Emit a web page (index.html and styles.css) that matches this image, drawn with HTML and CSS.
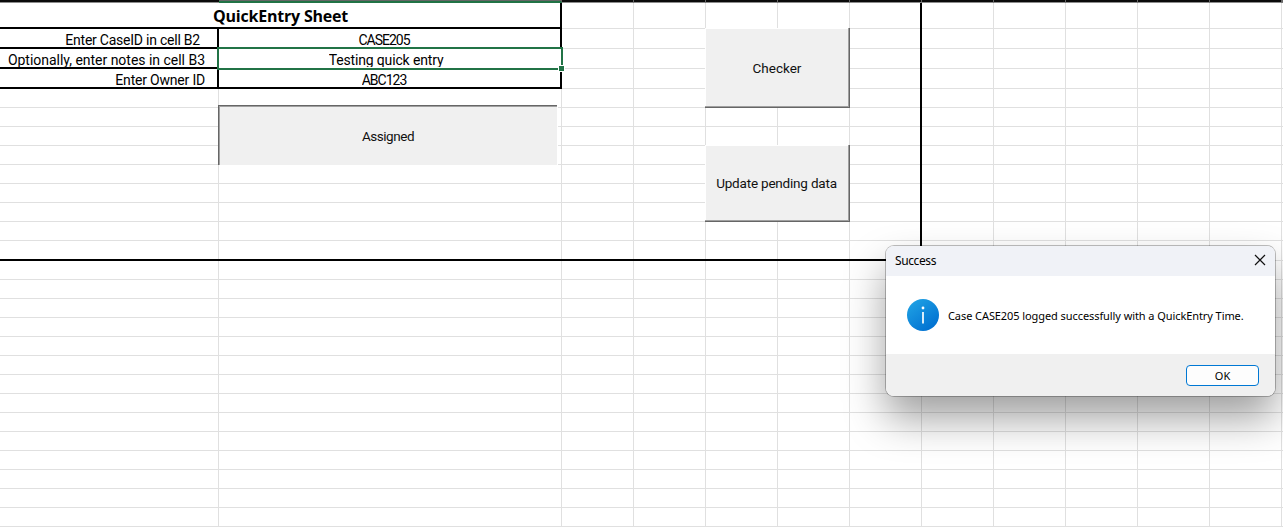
FILE: index.html
```html
<!DOCTYPE html>
<html lang="en">
<head>
<meta charset="utf-8">
<title>QuickEntry Sheet</title>
<link rel="stylesheet" href="styles.css">
</head>
<body>
<main class="workbook">
  <table class="sheet">
    <colgroup>
      <col class="col-label"><col class="col-value">
      <col span="10" class="col-std"><col class="col-last">
    </colgroup>
    <thead>
      <tr class="strip"><th></th><th class="active"></th><th></th><th></th><th></th><th></th><th></th><th></th><th></th><th></th><th></th><th></th><th></th></tr>
    </thead>
    <tbody id="rows">
      <tr class="title-row"><td colspan="2" class="heading boxed"><span class="t-title">QuickEntry Sheet</span></td></tr>
      <tr class="entry"><td class="label boxed indent"><span class="t-case">Enter CaseID in cell B2</span></td><td class="value boxed"><span class="t-id">CASE205</span></td></tr>
      <tr class="entry"><td class="label boxed"><span class="t-notes">Optionally, enter notes in cell B3</span></td><td class="value boxed selected"><span class="t-test">Testing quick entry</span></td></tr>
      <tr class="entry"><td class="label boxed"><span class="t-owner">Enter Owner ID</span></td><td class="value boxed"><span class="t-id">ABC123</span></td></tr>
    </tbody>
  </table>

  <div class="frame"></div>
  <div class="selection"><i class="handle"></i></div>

  <button class="macro pressed assigned"><span>Assigned</span></button>
  <button class="macro raised checker"><span>Checker</span></button>
  <button class="macro raised update"><span>Update pending data</span></button>

  <section class="dialog">
    <header class="dialog-title">
      <span class="t-success">Success</span>
      <svg class="close" width="12" height="12" viewBox="0 0 12 12"><path d="M1 1 11 11M11 1 1 11" fill="none" stroke="#111" stroke-width="1.2"/></svg>
    </header>
    <div class="dialog-body">
      <svg width="32" height="32" viewBox="0 0 32 32">
        <defs><linearGradient id="info" x1="0.15" y1="0.1" x2="0.8" y2="0.95"><stop offset="0" stop-color="#1e9fe3"/><stop offset="1" stop-color="#0070d1"/></linearGradient></defs>
        <circle cx="16" cy="16" r="16" fill="url(#info)"/>
        <circle cx="16" cy="9" r="1.4" fill="#fff"/>
        <path d="M16 13v11.5" stroke="#fff" stroke-width="1.7"/>
      </svg>
      <span class="t-message">Case CASE205 logged successfully with a QuickEntry Time.</span>
    </div>
    <footer class="dialog-footer"><button class="ok">OK</button></footer>
  </section>
</main>
<script src="sheet.js"></script>
</body>
</html>
```

FILE: sheet.js
```js
// Fill the grid with empty cells out to the last visible column and row.
const COLUMNS = 13;
const ROWS = 27;
const FRAME_ROW = 13;
const body = document.getElementById("rows");

while (body.rows.length < ROWS) body.insertRow();

Array.from(body.rows).forEach((row, r) => {
  let used = Array.from(row.cells).reduce((n, c) => n + c.colSpan, 0);
  for (; used < COLUMNS; used++) row.insertCell();
  if (r === FRAME_ROW - 1) row.classList.add("frame-bottom");
});
```

FILE: styles.css
```css
* { box-sizing: border-box; }

body {
  margin: 0;
  background: #fff;
  color: #000;
  font-family: "Noto Sans", "Open Sans", sans-serif;
}

.workbook {
  position: relative;
  width: 1283px;
  height: 527px;
  overflow: hidden;
}

.sheet {
  width: 1283px;
  table-layout: fixed;
  border-collapse: separate;
  border-spacing: 0;
}
.col-label { width: 219px; }
.col-value { width: 343px; }
.col-std { width: 72px; }
.col-last { width: 1px; }

.strip th {
  height: 3px;
  padding: 0;
  background: #0a0a0a;
  border-bottom: 1px solid #8c8c8c;
  border-right: 1px solid #666;
}
.strip th:first-child { border-right: 0; }
.strip th.active {
  background: #666;
  border-bottom: 2px solid #217346;
}

.sheet td {
  height: 19px;
  padding: 0;
  border-right: 1px solid #e0e0e0;
  border-bottom: 1px solid #e0e0e0;
  line-height: 0;
  white-space: nowrap;
}
.sheet td:last-child { border-right: 0; }
.sheet .title-row td { height: 26px; }
.sheet .entry td { height: 20px; }
.sheet td.boxed {
  border-right: 2px solid #000;
  border-bottom: 2px solid #000;
}
.sheet td.selected { border-color: #fff; }
.sheet .frame-bottom td { height: 20px; }

/* Thick outline around the working area */
.frame {
  position: absolute;
  left: 0;
  top: 3px;
  width: 922px;
  height: 258px;
  border: solid #000;
  border-width: 0 2px 2px 0;
}

.heading, .value { text-align: center; }
.label { text-align: right; }
.sheet .label { padding-right: 11px; }
.sheet .label.indent { padding-right: 16px; }
.sheet .value { padding-right: 10px; }
.sheet .value.selected { padding-right: 6px; }
.sheet td span {
  display: inline-block;
  height: 18px;
  padding-right: 1px;
  line-height: 22px;
  font-family: Roboto, sans-serif;
  font-size: 14px;
  vertical-align: top;
  overflow: hidden;
}
.sheet td .t-title {
  height: 24px;
  padding-left: 2px;
  line-height: 27px;
  font-family: "Open Sans", sans-serif;
  font-size: 16px;
  font-weight: 700;
  letter-spacing: -.2px;
}
.sheet td .t-case { letter-spacing: -.23px; }
.sheet td .t-notes { letter-spacing: -.02px; }
.sheet td .t-owner { letter-spacing: -.2px; }
.sheet td .t-test { letter-spacing: -.15px; }
.sheet td .t-id { font-size: 14px; letter-spacing: -1px; }

.selection {
  position: absolute;
  left: 217px;
  top: 47px;
  width: 346px;
  height: 23px;
  border: 2px solid #217346;
}
.handle {
  position: absolute;
  right: -4px;
  bottom: -4px;
  width: 7px;
  height: 7px;
  background: #217346;
  border: 1px solid #fff;
}

.macro {
  position: absolute;
  display: flex;
  align-items: center;
  justify-content: center;
  padding: 1px 0 0;
  border: 0;
  background: #f0f0f0;
  color: #111;
  font: 13.5px Roboto, sans-serif;
  letter-spacing: -.2px;
  white-space: nowrap;
}
.pressed {
  border-top: 1px solid #666;
  border-left: 1px solid #666;
  box-shadow: inset 1px 1px #a0a0a0, 1px 1px #fff;
}
.raised {
  border-right: 1px solid #666;
  border-bottom: 1px solid #666;
  box-shadow: inset -1px -1px #a0a0a0, inset 1px 1px #fff;
}
.assigned { left: 218px; top: 105px; width: 339px; height: 60px; letter-spacing: -.45px; }
.checker { left: 705px; top: 28px; width: 145px; height: 80px; letter-spacing: 0; }
.update { left: 705px; top: 145px; width: 145px; height: 77px; padding: 0 1px 1px 0; }

.dialog {
  position: absolute;
  left: 886px;
  top: 246px;
  width: 389px;
  height: 150px;
  display: flex;
  flex-direction: column;
  border-radius: 8px;
  background: #fff;
  font-size: 12px;
  box-shadow: 0 0 0 1px rgba(0, 0, 0, .25), 0 22px 42px rgba(0, 0, 0, .38);
}
.dialog-title {
  display: flex;
  align-items: center;
  justify-content: space-between;
  height: 30px;
  padding: 0 9px;
  border-radius: 8px 8px 0 0;
  background: #f0f2f7;
}
.close { margin-top: -2px; }
.dialog-body {
  flex: 1;
  display: flex;
  align-items: center;
  gap: 9px;
  padding: 0 0 0 21px;
  white-space: nowrap;
}
.t-success { margin-top: -2px; font-size: 12px; letter-spacing: -.4px; }
.t-message { font-size: 11px; letter-spacing: -.08px; }
.dialog-footer {
  display: flex;
  justify-content: flex-end;
  align-items: center;
  height: 42px;
  padding-right: 16px;
  border-radius: 0 0 8px 8px;
  background: #f0f0f0;
}
.ok {
  width: 73px;
  height: 21px;
  padding: 0;
  border: 1px solid #0078d4;
  border-radius: 4px;
  background: #fdfdfd;
  color: #000;
  font: 11px "Noto Sans", sans-serif;
}
```
